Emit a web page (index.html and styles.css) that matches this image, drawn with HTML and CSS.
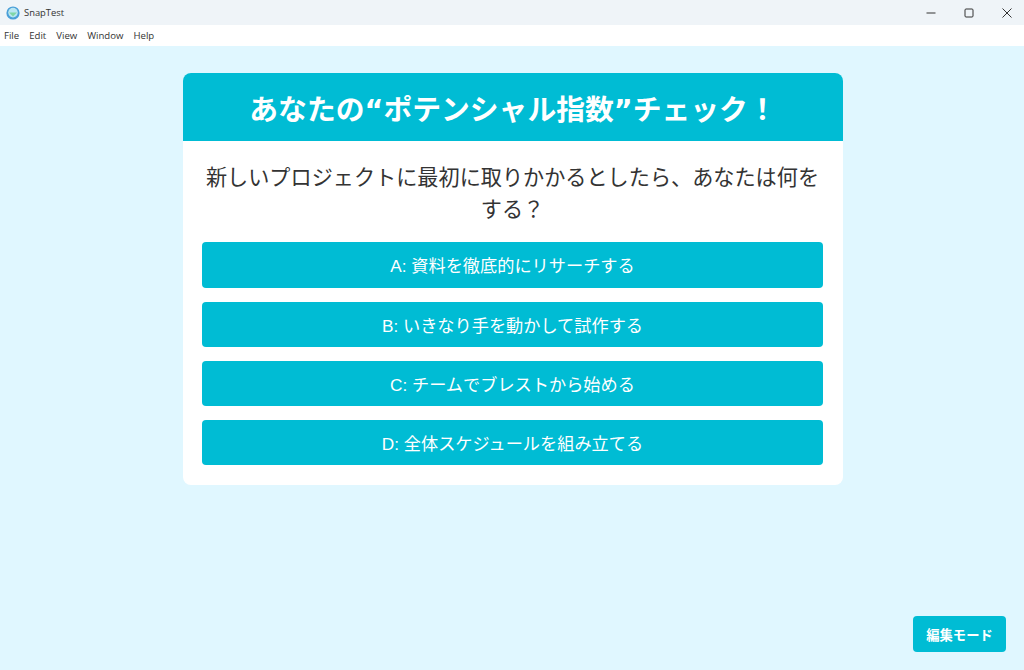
FILE: index.html
```html
<!DOCTYPE html>
<html lang="ja">
<head>
    <meta charset="UTF-8">
    <meta name="viewport" content="width=device-width, initial-scale=1.0">
    <title>SnapTest</title>
    <link rel="stylesheet" href="styles.css">
</head>
<body>
    <header class="titlebar">
        <div class="app-title">
            <svg class="app-icon" viewBox="0 0 14 14" width="14" height="14">
                <circle cx="7" cy="7" r="6.6" fill="#4a9fd8"/>
                <circle cx="7" cy="6.6" r="4.8" fill="#b9e6f2"/>
                <path d="M3 6.5 H11 L7 10.6 Z" fill="#7fd6a6"/>
            </svg>
            <span>SnapTest</span>
        </div>
        <div class="window-controls">
            <svg viewBox="0 0 10 10" width="10" height="10"><path d="M0.5 5H9.5" stroke="#333" fill="none"/></svg>
            <svg viewBox="0 0 10 10" width="10" height="10"><rect x="1" y="1" width="8" height="8" rx="1" stroke="#333" fill="none"/></svg>
            <svg viewBox="0 0 10 10" width="10" height="10"><path d="M0.5 0.5L9.5 9.5M9.5 0.5L0.5 9.5" stroke="#333" fill="none"/></svg>
        </div>
    </header>
    <nav class="menubar">
        <a href="#">File</a>
        <a href="#">Edit</a>
        <a href="#">View</a>
        <a href="#">Window</a>
        <a href="#">Help</a>
    </nav>

    <main class="content">
        <section class="card">
            <h1 class="card-title">あなたの“ポテンシャル指数”チェック！</h1>
            <div class="card-body">
                <p class="question">新しいプロジェクトに最初に取りかかるとしたら、あなたは何をする？</p>
                <button class="option">A: 資料を徹底的にリサーチする</button>
                <button class="option">B: いきなり手を動かして試作する</button>
                <button class="option">C: チームでブレストから始める</button>
                <button class="option">D: 全体スケジュールを組み立てる</button>
            </div>
        </section>
        <button class="edit-btn">編集モード</button>
    </main>
</body>
</html>
```

FILE: styles.css
```css
:root {
    --primary-color: #00bcd4;
    --background-color: #e0f7ff;
    --text-color: #333;
}

* {
    box-sizing: border-box;
}

html, body {
    height: 100%;
}

body {
    margin: 0;
    display: flex;
    flex-direction: column;
    font-family: 'Open Sans', 'Noto Sans CJK JP', sans-serif;
    background-color: var(--background-color);
    color: var(--text-color);
}

.titlebar {
    height: 25px;
    flex: none;
    display: flex;
    justify-content: space-between;
    align-items: center;
    background-color: #eff4f8;
    padding-left: 6px;
    font-size: 9.4px;
}

.app-title {
    display: flex;
    align-items: center;
    gap: 4px;
}

.app-icon {
    display: block;
}

.window-controls {
    display: flex;
    gap: 28px;
    padding-right: 12px;
}

.window-controls svg {
    display: block;
}

.menubar {
    height: 21px;
    flex: none;
    display: flex;
    align-items: center;
    gap: 10px;
    padding-left: 4px;
    background-color: #fff;
    font-size: 9.6px;
}

.menubar a {
    color: #333;
    text-decoration: none;
}

.content {
    flex: 1;
    position: relative;
    padding-top: 27px;
}

.card {
    width: 660px;
    margin-left: 183px;
    background-color: #fff;
    border-radius: 8px;
    overflow: hidden;
}

.card-title {
    margin: 0;
    height: 68px;
    display: flex;
    align-items: center;
    justify-content: center;
    background-color: var(--primary-color);
    color: #fff;
    font-family: 'DejaVu Sans', 'Noto Sans CJK JP', sans-serif;
    font-size: 28.8px;
    font-weight: 700;
}

.card-body {
    padding: 20px 20px 20px 19px;
}

.question {
    margin: 0 0 17.4px;
    font-size: 21.15px;
    line-height: 32px;
    text-align: center;
}

.option {
    display: block;
    width: 100%;
    height: 45.2px;
    margin-bottom: 14px;
    border: none;
    border-radius: 4px;
    background-color: var(--primary-color);
    color: #fff;
    font-family: 'Liberation Sans', 'Noto Sans CJK JP', sans-serif;
    font-size: 17.2px;
}

.option:last-child {
    margin-bottom: 0;
}

.edit-btn {
    position: absolute;
    right: 18px;
    bottom: 18px;
    width: 93px;
    height: 36px;
    border: none;
    border-radius: 4px;
    background-color: var(--primary-color);
    color: #fff;
    font-family: inherit;
    font-size: 13.3px;
    font-weight: 700;
}
```
